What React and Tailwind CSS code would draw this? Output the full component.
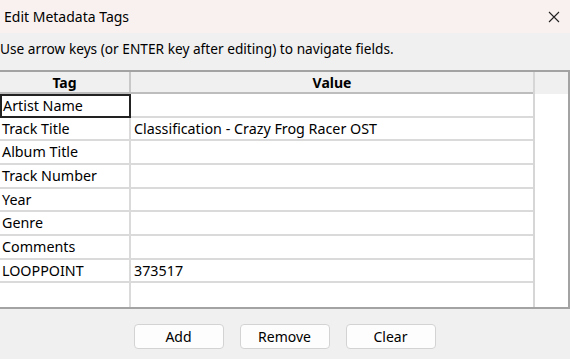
import React from 'react';

const rows = [
  ['Artist Name', ''],
  ['Track Title', 'Classification - Crazy Frog Racer OST'],
  ['Album Title', ''],
  ['Track Number', ''],
  ['Year', ''],
  ['Genre', ''],
  ['Comments', ''],
  ['LOOPPOINT', '373517'],
  ['', ''],
];

const App = () => {
  return (
    <div
      className="w-[570px] h-[359px] bg-[#f0f0f0] text-[#1a1a1a] flex flex-col overflow-hidden"
      style={{ fontFamily: '"Noto Sans", "Open Sans", sans-serif' }}
    >
      {/* title bar */}
      <div className="h-[33px] bg-[#f9f1ef] flex items-center justify-between pl-[4px] pr-[8px] shrink-0">
        <span className="text-[14px] text-black">Edit Metadata Tags</span>
        <svg width="12" height="12" viewBox="0 0 12 12" className="mr-[2px]">
          <path d="M1 1 L11 11 M11 1 L1 11" stroke="#222" strokeWidth="1.1" />
        </svg>
      </div>

      <div className="h-[37px] flex items-center text-[13.7px] text-black shrink-0 pb-[4px]">
        Use arrow keys (or ENTER key after editing) to navigate fields.
      </div>

      {/* table */}
      <div className="h-[239px] border-t-2 border-b-2 border-r-2 border-[#a3a3a3] flex bg-white shrink-0">
        <div className="w-[535px] flex flex-col border-r-2 border-[#d6d6d6]">
          <div className="h-[22px] flex bg-[#f0f0f0] border-b-2 border-[#bdbdbd] text-[14px] font-bold text-black">
            <div className="w-[131px] flex items-center justify-center border-r-2 border-[#c8c8c8]">Tag</div>
            <div className="flex-1 flex items-center justify-center">Value</div>
          </div>
          {rows.map((r, i) => (
            <div key={i} className="h-[23.67px] flex border-b-2 border-[#dadada] last:border-b-0 text-[14.3px] text-black">
              <div
                className={
                  i === 0
                    ? 'w-[131px] flex items-center pl-[1px] border-2 border-[#222] -mb-[2px] relative'
                    : 'w-[131px] flex items-center pl-[2px] border-r-2 border-[#dadada]'
                }
              >
                {r[0]}
              </div>
              <div className="flex-1 flex items-center pl-[3px]">{r[1]}</div>
            </div>
          ))}
        </div>
        <div className="flex-1 flex flex-col">
          <div className="h-[22px] bg-[#f0f0f0]" />
        </div>
      </div>

      <div className="flex-1 flex justify-center items-start pt-[15px] gap-[16px] pr-[1px]">
        {['Add', 'Remove', 'Clear'].map((b) => (
          <button
            key={b}
            className="w-[90px] h-[25px] bg-[#fdfdfd] border border-[#d3d3d3] rounded-[4px] text-[14px] text-black flex items-center justify-center"
          >
            {b}
          </button>
        ))}
      </div>
    </div>
  );
};

export default App;
